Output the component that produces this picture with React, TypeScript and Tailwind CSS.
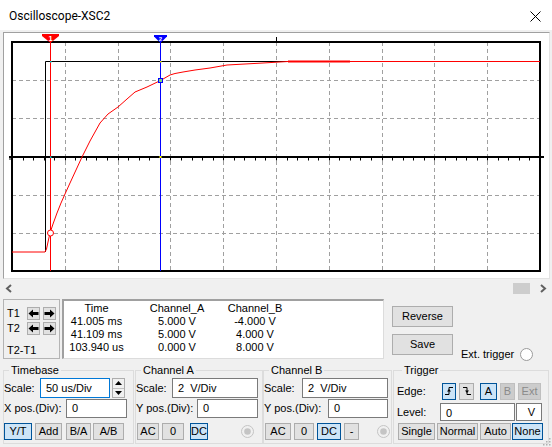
import React from "react";

const btnBase = "flex items-center justify-center h-[17px] border text-[11px] leading-none shrink-0";
const normal = "bg-[#e1e1e1] border-[#adadad]";
const active = "bg-[#cce4f7] border-[#005499]";
const disabled = "bg-[#cccccc] border-[#bfbfbf] text-[#8a8a8a]";
const inputCls = "flex items-center bg-white border border-[#7a7a7a] pl-[5px] whitespace-pre shrink-0";

function Radio({ dot }: { dot?: boolean }) {
  return (
    <svg width="13" height="13" viewBox="0 0 13 13" className="shrink-0">
      <circle cx="6.5" cy="6.5" r="6" fill={dot ? "#f0f0f0" : "#ffffff"} stroke={dot ? "#c4c4c4" : "#9a9a9a"} />
      {dot && <circle cx="6.5" cy="6.5" r="3.3" fill="#c4c4c4" />}
    </svg>
  );
}

function ArrowBtn({ dir }: { dir: "l" | "r" }) {
  return (
    <div className="w-[13px] h-[13px] bg-[#e1e1e1] border border-[#adadad] flex items-center justify-center">
      <svg width="11" height="9" viewBox="0 0 11 9">
        {dir === "l" ? (
          <path d="M0.5 4.5 L5 0.5 V3 H10.5 V6 H5 V8.5 Z" fill="#000" />
        ) : (
          <path d="M10.5 4.5 L6 0.5 V3 H0.5 V6 H6 V8.5 Z" fill="#000" />
        )}
      </svg>
    </div>
  );
}

function Plot() {
  const gx = [65, 118, 170, 223, 276, 329, 382, 434, 487];
  const gy = [80, 118, 195, 233];
  const ticks: number[] = [];
  for (let i = 1; i < 50; i++) ticks.push(Math.round(12 + 10.56 * i) + 0.5);
  const red =
    "12,252 45,252 46.5,249 48,242 50,233 53,224 57,213 61,203 65,194 70,183 76,170 82,157 86,149 90,141 95,132 100,123 108,114 118,107 127,99 135,92 147,87 160.5,80.5 170,75 175,73.5 183,72 195,70 210,68 227,65 245,64 263,63 288,61.5";
  return (
    <div className="ml-[3px] mt-[2px] w-[547px] h-[247px] bg-white border-t border-l border-[#a0a0a0] border-r border-b border-r-[#e3e3e3] border-b-[#e3e3e3]">
      <svg width="545" height="245" viewBox="4 33 545 245" className="block">
        {gx.map((x) => (
          <line key={"v" + x} x1={x + 0.5} y1="42" x2={x + 0.5} y2="271" stroke="#a0a0a0" strokeDasharray="4 3" />
        ))}
        {gy.map((y) => (
          <line key={"h" + y} x1="12" y1={y + 0.5} x2="540" y2={y + 0.5} stroke="#a0a0a0" strokeDasharray="4 3" />
        ))}
        <rect x="12" y="42" width="528" height="229" fill="none" stroke="#000" strokeWidth="2" />
        <line x1="276.5" y1="37" x2="276.5" y2="42" stroke="#000" />
        <line x1="9" y1="157" x2="544" y2="157" stroke="#000" strokeWidth="2" />
        {ticks.map((x) => (
          <line key={"t" + x} x1={x} y1="157" x2={x} y2="160.5" stroke="#000" />
        ))}
        <line x1="10" y1="156" x2="10" y2="160" stroke="#000" />
        {/* channel B trace */}
        <polyline points="45.5,252 45.5,61.5 288,61.5" fill="none" stroke="#000" />
        {/* channel A trace */}
        <polyline points={red} fill="none" stroke="#ff0000" />
        <line x1="288" y1="61.5" x2="350" y2="61.5" stroke="#ff0000" strokeWidth="2" />
        <line x1="350" y1="61.5" x2="540" y2="61.5" stroke="#ff0000" />
        {/* cursors */}
        <line x1="50.5" y1="41" x2="50.5" y2="271" stroke="#ff0000" />
        <line x1="160.5" y1="41" x2="160.5" y2="271" stroke="#0000ff" />
        <polygon points="42,34 59,34 59,36 51,42.5 50,42.5 42,36" fill="#ff0000" />
        <text x="50.5" y="40.5" textAnchor="middle" fontSize="7.5" fontWeight="bold" fill="#fff" fontFamily="Liberation Sans, Arial, sans-serif">1</text>
        <polygon points="154,35 167,35 167,36.5 161,42.5 160,42.5 154,36.5" fill="#0000ff" />
        <text x="160.5" y="40.5" textAnchor="middle" fontSize="6" fontWeight="bold" fill="#fff" fontFamily="Liberation Sans, Arial, sans-serif">2</text>
        {/* markers */}
        <circle cx="50.5" cy="233" r="3" fill="#fff" stroke="#ff0000" />
        <rect x="158.5" y="78.5" width="4" height="4" fill="#7fd37f" stroke="#0000ff" />
        <rect x="50" y="61" width="1.5" height="1.5" fill="#00d0d0" />
        <rect x="50" y="156.5" width="1.5" height="1.5" fill="#00d0d0" />
        <rect x="160" y="61" width="1.5" height="1.5" fill="#e0e000" />
        <rect x="159.5" y="156" width="2" height="2" fill="#ffff00" />
      </svg>
    </div>
  );
}

function ScrollBar() {
  return (
    <div className="h-[18px] flex items-center">
      <svg width="8" height="9" viewBox="0 0 8 9" className="ml-[5px]">
        <path d="M6 1 L2 4.5 L6 8" fill="none" stroke="#606060" strokeWidth="2" />
      </svg>
      <div className="flex-1" />
      <div className="w-[17px] h-[11px] bg-[#cdcdcd]" />
      <svg width="8" height="9" viewBox="0 0 8 9" className="ml-[9px] mr-[5px]">
        <path d="M2 1 L6 4.5 L2 8" fill="none" stroke="#606060" strokeWidth="2" />
      </svg>
    </div>
  );
}

function Readout() {
  const rows = [
    ["Time", "Channel_A", "Channel_B"],
    ["41.005 ms", "5.000 V", "-4.000 V"],
    ["41.109 ms", "5.000 V", "4.000 V"],
    ["103.940 us", "0.000 V", "8.000 V"],
  ];
  return (
    <div className="mt-[2px] flex h-[60px]">
      <div className="ml-[3px] w-[57px] h-[60px] border border-[#b4b4b4] pt-[7px]">
        <div className="flex items-center h-[13px]">
          <span className="w-[23px] pl-[3px]">T1</span>
          <div className="flex gap-[3px]">
            <ArrowBtn dir="l" />
            <ArrowBtn dir="r" />
          </div>
        </div>
        <div className="flex items-center h-[13px] mt-[2px]">
          <span className="w-[23px] pl-[3px]">T2</span>
          <div className="flex gap-[3px]">
            <ArrowBtn dir="l" />
            <ArrowBtn dir="r" />
          </div>
        </div>
        <div className="mt-[9px] pl-[3px] h-[13px]">T2-T1</div>
      </div>
      <div className="ml-[2px] w-[322px] h-[60px] bg-white border-t-2 border-l-2 border-[#a0a0a0] border-r border-b border-r-[#dcdcdc] border-b-[#dcdcdc] pt-[1px]">
        {rows.map((r, i) => (
          <div key={i} className="grid grid-cols-[65px_96px_60px] h-[13px] leading-[13px]">
            <span className="text-center">{r[0]}</span>
            <span className="text-center">{r[1]}</span>
            <span className="text-center whitespace-nowrap">{r[2]}</span>
          </div>
        ))}
      </div>
      <div className="ml-[8px] w-[61px] pt-[7px] flex flex-col gap-[7px]">
        <div className={`${btnBase} ${normal} h-[21px] w-[61px]`}>Reverse</div>
        <div className={`${btnBase} ${normal} h-[21px] w-[61px]`}>Save</div>
      </div>
      <div className="ml-[8px] flex items-end pb-[-1px]">
        <div className="flex items-center mb-[-2px]">
          <span className="w-[55px]">Ext. trigger</span>
          <span className="ml-[4px]"><Radio /></span>
        </div>
      </div>
    </div>
  );
}

function Controls() {
  const fs = "h-[80px] border border-[#dcdcdc] shrink-0";
  const lg = "ml-[5px] px-[2px] h-[13px] leading-[13px]";
  return (
    <div className="mt-[5px] flex">
      {/* Timebase */}
      <fieldset className={`${fs} ml-[3px] w-[131px]`}>
        <legend className={lg}>Timebase</legend>
        <div className="flex items-center h-[20px] mt-[1px]">
          <span className="w-[36px]">Scale:</span>
          <div className={`${inputCls} w-[70px] h-[20px] border-[#0078d7]`}>50 us/Div</div>
          <div className="ml-[2px] w-[13px] h-[20px] border border-[#adadad] bg-[#f0f0f0] flex flex-col">
            <div className="flex-1 flex items-center justify-center border-b border-[#c0c0c0]">
              <svg width="7" height="4" viewBox="0 0 7 4"><path d="M0 4 L3.5 0 L7 4 Z" fill="#000" /></svg>
            </div>
            <div className="flex-1 flex items-center justify-center">
              <svg width="7" height="4" viewBox="0 0 7 4"><path d="M0 0 L3.5 4 L7 0 Z" fill="#000" /></svg>
            </div>
          </div>
        </div>
        <div className="flex items-center h-[19px] mt-[1px]">
          <span className="w-[62px] whitespace-nowrap">X pos.(Div):</span>
          <div className={`${inputCls} w-[61px] h-[19px]`}>0</div>
        </div>
        <div className="flex items-center mt-[5px]">
          <div className={`${btnBase} ${active} w-[28px]`}>Y/T</div>
          <div className={`${btnBase} ${normal} w-[27px] ml-[3px]`}>Add</div>
          <div className={`${btnBase} ${normal} w-[25px] ml-[4px]`}>B/A</div>
          <div className={`${btnBase} ${normal} w-[31px] ml-[2px]`}>A/B</div>
        </div>
      </fieldset>
      {/* Channel A */}
      <fieldset className={`${fs} ml-[1px] w-[128px]`}>
        <legend className={lg}>Channel A</legend>
        <div className="flex items-center h-[20px] mt-[1px]">
          <span className="w-[36px]">Scale:</span>
          <div className={`${inputCls} w-[86px] h-[20px]`}>2  V/Div</div>
        </div>
        <div className="flex items-center h-[19px] mt-[1px]">
          <span className="w-[61px] whitespace-nowrap">Y pos.(Div):</span>
          <div className={`${inputCls} w-[61px] h-[19px]`}>0</div>
        </div>
        <div className="flex items-center mt-[5px]">
          <div className={`${btnBase} ${normal} w-[22px] ml-[1px]`}>AC</div>
          <div className={`${btnBase} ${normal} w-[22px] ml-[3px]`}>0</div>
          <div className={`${btnBase} ${active} w-[18px] ml-[6px]`}>DC</div>
          <span className="ml-[33px]"><Radio dot /></span>
        </div>
      </fieldset>
      {/* Channel B */}
      <fieldset className={`${fs} w-[129px]`}>
        <legend className={lg}>Channel B</legend>
        <div className="flex items-center h-[20px] mt-[1px]">
          <span className="w-[38px]">Scale:</span>
          <div className={`${inputCls} w-[86px] h-[20px]`}>2  V/Div</div>
        </div>
        <div className="flex items-center h-[19px] mt-[1px]">
          <span className="w-[64px] whitespace-nowrap">Y pos.(Div):</span>
          <div className={`${inputCls} w-[60px] h-[19px]`}>0</div>
        </div>
        <div className="flex items-center mt-[5px]">
          <div className={`${btnBase} ${normal} w-[26px] ml-[1px]`}>AC</div>
          <div className={`${btnBase} ${normal} w-[20px] ml-[3px]`}>0</div>
          <div className={`${btnBase} ${active} w-[24px] ml-[3px]`}>DC</div>
          <div className={`${btnBase} ${normal} w-[15px] ml-[3px]`}>-</div>
          <span className="ml-[18px]"><Radio dot /></span>
        </div>
      </fieldset>
      {/* Trigger */}
      <fieldset className={`${fs} ml-[1px] w-[156px] pl-[3px]`}>
        <legend className={lg}>Trigger</legend>
        <div className="flex items-center h-[20px] mt-[4px]">
          <span className="w-[45px]">Edge:</span>
          <div className={`${btnBase} ${active} w-[14px] h-[14px]`}>
            <svg width="10" height="10" viewBox="0 0 10 10">
              <path d="M1 8.5 H5 V1.5 H9" fill="none" stroke="#000" />
              <path d="M3 5.5 L5 3 L7 5.5 Z" fill="#000" />
            </svg>
          </div>
          <div className={`${btnBase} ${normal} w-[15px] h-[14px] ml-[3px]`}>
            <svg width="10" height="10" viewBox="0 0 10 10">
              <path d="M1 1.5 H5 V8.5 H9" fill="none" stroke="#000" />
              <path d="M3 4.5 L5 7 L7 4.5 Z" fill="#000" />
            </svg>
          </div>
          <div className={`${btnBase} ${active} w-[17px] ml-[6px]`}>A</div>
          <div className={`${btnBase} ${disabled} w-[15px] ml-[3px]`}>B</div>
          <div className={`${btnBase} ${disabled} w-[23px] ml-[3px]`}>Ext</div>
        </div>
        <div className="flex items-center h-[18px] mt-[2px]">
          <span className="w-[43px]">Level:</span>
          <div className={`${inputCls} w-[75px] h-[18px] pt-[2px]`}>0</div>
          <div className={`${inputCls} w-[26px] h-[18px] ml-[1px] justify-center pl-0`}>V</div>
        </div>
        <div className="flex items-center mt-[2px] ml-[1px]">
          <div className={`${btnBase} ${normal} w-[37px]`}>Single</div>
          <div className={`${btnBase} ${normal} w-[41px] ml-[2px]`}>Normal</div>
          <div className={`${btnBase} ${normal} w-[31px] ml-[2px]`}>Auto</div>
          <div className={`${btnBase} ${active} w-[31px] ml-[1px]`}>None</div>
        </div>
      </fieldset>
    </div>
  );
}

export default function App() {
  return (
    <div className="relative w-[552px] h-[447px] overflow-hidden bg-[#f0f0f0] font-['Liberation_Sans',Arial,sans-serif] text-[11px] leading-[13px] text-black">
      <div className="h-[30px] bg-white flex items-center justify-between pl-[9px] pr-[11px]">
        <span className="font-['Roboto',Arial,sans-serif] text-[12px] leading-none mt-[2px]">Oscilloscope-XSC2</span>
        <svg width="11" height="11" viewBox="0 0 11 11" className="mt-[2px]">
          <path d="M0.5 0.5 L10.5 10.5 M10.5 0.5 L0.5 10.5" stroke="#000" strokeWidth="1" />
        </svg>
      </div>
      <Plot />
      <ScrollBar />
      <Readout />
      <Controls />
      <svg width="10" height="10" viewBox="0 0 10 10" className="absolute right-[1px] bottom-[1px]">
        {[[8, 2], [8, 5], [8, 8], [5, 5], [5, 8], [2, 8]].map(([x, y], i) => (
          <rect key={i} x={x} y={y} width="1.5" height="1.5" fill="#b0b0b0" />
        ))}
      </svg>
    </div>
  );
}
